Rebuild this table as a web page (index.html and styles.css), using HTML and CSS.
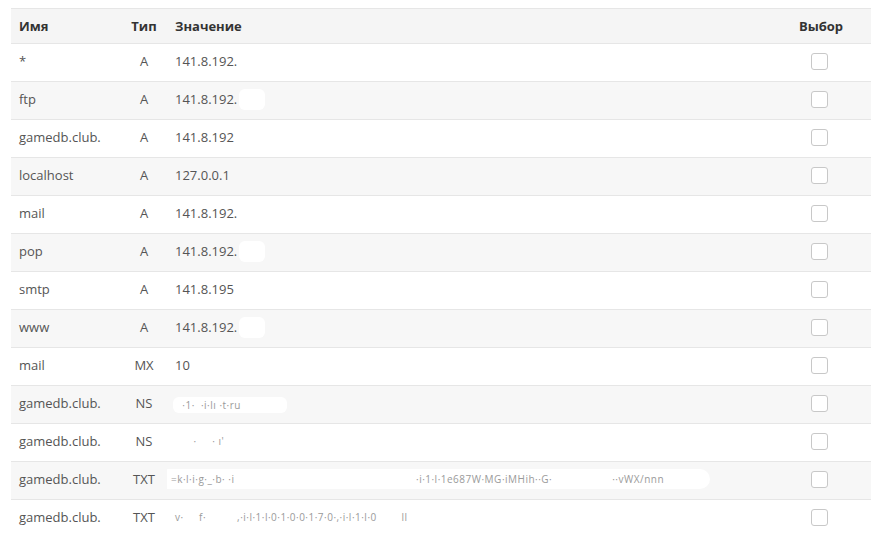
FILE: index.html
```html
<!DOCTYPE html>
<html lang="ru">
<head>
<meta charset="utf-8">
<link rel="stylesheet" href="styles.css">
</head>
<body>
<table class="dns">
  <thead>
    <tr><th class="c-name">Имя</th><th class="c-type">Тип</th><th class="c-val">Значение</th><th class="c-sel">Выбор</th></tr>
  </thead>
  <tbody>
    <tr><td>*</td><td class="c-type">A</td><td>141.8.192.</td><td class="c-sel"><span class="cb"></span></td></tr>
    <tr><td>ftp</td><td class="c-type">A</td><td>141.8.192.<span class="mask m-ip"></span></td><td class="c-sel"><span class="cb"></span></td></tr>
    <tr><td>gamedb.club.</td><td class="c-type">A</td><td>141.8.192</td><td class="c-sel"><span class="cb"></span></td></tr>
    <tr><td>localhost</td><td class="c-type">A</td><td>127.0.0.1</td><td class="c-sel"><span class="cb"></span></td></tr>
    <tr><td>mail</td><td class="c-type">A</td><td>141.8.192.</td><td class="c-sel"><span class="cb"></span></td></tr>
    <tr><td>pop</td><td class="c-type">A</td><td>141.8.192.<span class="mask m-ip"></span></td><td class="c-sel"><span class="cb"></span></td></tr>
    <tr><td>smtp</td><td class="c-type">A</td><td>141.8.195</td><td class="c-sel"><span class="cb"></span></td></tr>
    <tr><td>www</td><td class="c-type">A</td><td>141.8.192.<span class="mask m-ip"></span></td><td class="c-sel"><span class="cb"></span></td></tr>
    <tr><td>mail</td><td class="c-type">MX</td><td>10</td><td class="c-sel"><span class="cb"></span></td></tr>
    <tr><td>gamedb.club.</td><td class="c-type">NS</td><td><span class="faint mask m-ns">&nbsp;&nbsp;&nbsp;·1·&nbsp;&nbsp;·i·lı&nbsp;·t·ru</span></td><td class="c-sel"><span class="cb"></span></td></tr>
    <tr><td>gamedb.club.</td><td class="c-type">NS</td><td><span class="faint">&nbsp;&nbsp;&nbsp;&nbsp;&nbsp;&nbsp;·&nbsp;&nbsp;&nbsp;&nbsp;&nbsp;·&nbsp;ı'</span></td><td class="c-sel"><span class="cb"></span></td></tr>
    <tr><td>gamedb.club.</td><td class="c-type">TXT</td><td><span class="faint mask m-txt"><span class="gap1">=k·l·i·g·_·b· ·i</span>·i·1·l·1e687W·MG·iMHih··G·<span class="gap2"></span>··vWX/nnn</span></td><td class="c-sel"><span class="cb"></span></td></tr>
    <tr><td>gamedb.club.</td><td class="c-type">TXT</td><td><span class="faint">v·&nbsp;&nbsp;&nbsp;&nbsp;&nbsp;f·&nbsp;&nbsp;&nbsp;&nbsp;&nbsp;&nbsp;&nbsp;&nbsp;&nbsp;&nbsp;,·i·l·1·l·0·1·0·0·1·7·0·,·i·l·1·l·0&nbsp;&nbsp;&nbsp;&nbsp;&nbsp;&nbsp;&nbsp;&nbsp;ll</span></td><td class="c-sel"><span class="cb"></span></td></tr>
  </tbody>
</table>
</body>
</html>
```

FILE: styles.css
```css
html, body {
  margin: 0;
  padding: 0;
  background: #fff;
}
body {
  padding: 8px 6px 0 11px;
  font-family: "Open Sans", "Liberation Sans", sans-serif;
  font-size: 13px;
  color: #555;
}
.dns {
  width: 860px;
  border-collapse: collapse;
  border-spacing: 0;
  table-layout: fixed;
}
.dns th {
  background: #f5f5f5;
  color: #333;
  font-weight: 700;
  text-align: left;
  padding: 8px;
  height: 18px;
  line-height: 18px;
  border-top: 1px solid #e6e6e6;
}
.dns td {
  padding: 7px 8px 9px;
  height: 21px;
  line-height: 21px;
  border-top: 1px solid #e6e6e6;
  white-space: nowrap;
  overflow: hidden;
}
.dns tbody tr:nth-child(even) td {
  background: #f7f7f7;
}
.c-name { width: 94px; }
.dns .c-type { width: 30px; text-align: center; }
.c-val { width: auto; }
.dns .c-sel { width: 84px; text-align: center; }
.cb {
  display: inline-block;
  width: 15px;
  height: 15px;
  border: 1px solid #c8c8c8;
  border-radius: 3px;
  background: #fff;
  vertical-align: top;
  margin-top: 2px;
  margin-left: -3px;
}
.faint {
  display: inline-block;
  vertical-align: top;
  height: 21px;
  line-height: 21px;
  color: #9a9a9a;
  font-size: 10px;
  letter-spacing: 0.5px;
}
.mask {
  display: inline-block;
  background: #fff;
  vertical-align: top;
  border-radius: 6px;
}
.m-ip {
  width: 26px;
  height: 21px;
  margin-left: 2px;
}
.m-ns {
  height: 16px;
  line-height: 16px;
  margin-top: 4px;
  margin-left: -2px;
  width: 114px;
  overflow: hidden;
}
.m-txt {
  height: 20px;
  line-height: 20px;
  width: 545px;
  overflow: hidden;
  margin-left: -10px;
  border-radius: 4px 12px 12px 4px;
}
.gap1 {
  display: inline-block;
  vertical-align: top;
  width: 245px;
  padding-left: 6px;
}
.gap2 {
  display: inline-block;
  vertical-align: top;
  width: 60px;
}
```
